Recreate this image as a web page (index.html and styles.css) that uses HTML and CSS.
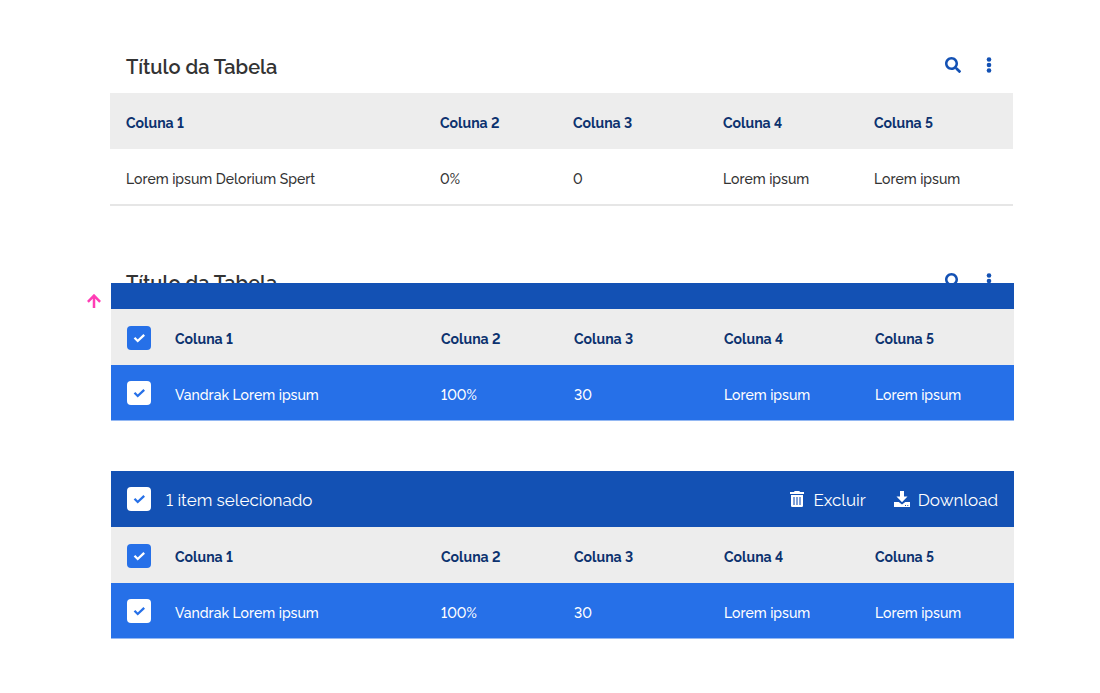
FILE: index.html
```html
<!DOCTYPE html>
<html lang="pt-BR">
<head>
<meta charset="utf-8">
<meta name="viewport" content="width=device-width, initial-scale=1">
<title>Título da Tabela</title>
<link rel="stylesheet" href="styles.css">
</head>
<body>
<svg class="sprite" aria-hidden="true">
  <symbol id="i-search" viewBox="0 0 512 512"><path d="M505 442.7 405.300 343c-4.500-4.500-10.600-7-17-7H372c27.600-35.300 44-79.700 44-128C416 93.100 322.900 0 208 0S0 93.100 0 208s93.100 208 208 208c48.300 0 92.700-16.400 128-44v16.300c0 6.400 2.500 12.500 7 17l99.700 99.700c9.400 9.400 24.600 9.400 33.900 0l28.300-28.300c9.400-9.400 9.400-24.600.1-34zM208 336c-70.700 0-128-57.200-128-128 0-70.700 57.200-128 128-128 70.700 0 128 57.200 128 128 0 70.700-57.200 128-128 128z"/></symbol>
  <symbol id="i-dots" viewBox="0 0 16 16"><circle cx="8" cy="2.500" r="2.300"/><circle cx="8" cy="8" r="2.300"/><circle cx="8" cy="13.500" r="2.300"/></symbol>
  <symbol id="i-check" viewBox="0 0 24 24"><path d="M7.500 11.800 10.700 15 17.200 8.800" fill="none" stroke="currentColor" stroke-width="2.300"/></symbol>
  <symbol id="i-trash" viewBox="0 0 16 16"><path d="M1 1h4L5.700 0h4.600L11 1h4v2H1z"/><path d="M2 4h12v10.800Q14 16 12.800 16H3.200Q2 16 2 14.800z"/><path class="slot" d="M4 6h2v8H4zM7 6h2v8H7zM10 6h2v8h-2z"/></symbol>
  <symbol id="i-download" viewBox="0 0 16 16"><path d="M6 0h4v5.500h3.500L8 11.300 2.500 5.500H6z"/><path fill-rule="evenodd" d="M0 11h4.700L8 13.500l3.300-2.500H16v5H0zM11 14v1h1v-1zM13.300 14v1h1v-1z"/></symbol>
  <symbol id="i-up" viewBox="0 0 14 14"><path d="M7 14V1.600M.900 7.800 7 1.600 13.100 7.800" fill="none" stroke="currentColor" stroke-width="2.500"/></symbol>
</svg>
<main>
  <section>
    <header class="bar">
      <h2>Título da Tabela</h2>
      <div class="tools">
        <button type="button" aria-label="Buscar"><svg><use href="#i-search"/></svg></button>
        <button type="button" aria-label="Mais opções"><svg><use href="#i-dots"/></svg></button>
      </div>
    </header>
    <table>
      <colgroup><col><col class="c2"><col class="c3"><col class="c4"><col class="c5"></colgroup>
      <thead><tr><th>Coluna 1</th><th>Coluna 2</th><th>Coluna 3</th><th>Coluna 4</th><th>Coluna 5</th></tr></thead>
      <tbody><tr><td>Lorem ipsum Delorium Spert</td><td>0%</td><td>0</td><td>Lorem ipsum</td><td>Lorem ipsum</td></tr></tbody>
    </table>
  </section>

  <section class="rising">
    <header class="bar">
      <h2>Título da Tabela</h2>
      <div class="tools">
        <button type="button" aria-label="Buscar"><svg><use href="#i-search"/></svg></button>
        <button type="button" aria-label="Mais opções"><svg><use href="#i-dots"/></svg></button>
      </div>
    </header>
    <div class="selected">
      <div class="cover"></div>
      <svg class="arrow" aria-hidden="true"><use href="#i-up"/></svg>
      <table>
        <colgroup><col class="c0"><col><col class="c2"><col class="c3"><col class="c4"><col class="c5"></colgroup>
        <thead><tr><th><label class="check"><input type="checkbox" checked aria-label="Selecionar tudo"><svg><use href="#i-check"/></svg></label></th><th>Coluna 1</th><th>Coluna 2</th><th>Coluna 3</th><th>Coluna 4</th><th>Coluna 5</th></tr></thead>
        <tbody><tr><td><label class="check light"><input type="checkbox" checked aria-label="Selecionar linha"><svg><use href="#i-check"/></svg></label></td><td>Vandrak Lorem ipsum</td><td>100%</td><td>30</td><td>Lorem ipsum</td><td>Lorem ipsum</td></tr></tbody>
      </table>
    </div>
  </section>

  <section class="selected">
    <header class="bar actions">
      <label class="check light"><input type="checkbox" checked aria-label="Selecionar todos os itens"><svg><use href="#i-check"/></svg></label>
      <p>1 item selecionado</p>
      <button type="button"><svg><use href="#i-trash"/></svg><span>Excluir</span></button>
      <button type="button"><svg><use href="#i-download"/></svg><span>Download</span></button>
    </header>
    <table>
      <colgroup><col class="c0"><col><col class="c2"><col class="c3"><col class="c4"><col class="c5"></colgroup>
      <thead><tr><th><label class="check"><input type="checkbox" checked aria-label="Selecionar tudo"><svg><use href="#i-check"/></svg></label></th><th>Coluna 1</th><th>Coluna 2</th><th>Coluna 3</th><th>Coluna 4</th><th>Coluna 5</th></tr></thead>
      <tbody><tr><td><label class="check light"><input type="checkbox" checked aria-label="Selecionar linha"><svg><use href="#i-check"/></svg></label></td><td>Vandrak Lorem ipsum</td><td>100%</td><td>30</td><td>Lorem ipsum</td><td>Lorem ipsum</td></tr></tbody>
    </table>
  </section>
</main>
</body>
</html>
```
FILE: styles.css
```css
* { box-sizing: border-box; }
body {
  margin: 0;
  background: #fff;
  color: #333;
  font: 500 14px/20px Raleway, Lato, "Open Sans", sans-serif;
  font-variant-numeric: lining-nums;
}
.sprite { position: absolute; width: 0; height: 0; }
main { padding: 37px 87px 48px 110px; }
svg { width: 16px; height: 16px; fill: currentColor; display: block; }

.bar {
  display: flex;
  align-items: center;
  height: 56px;
  padding: 0 16px;
}
h2 {
  margin: 0;
  padding-top: 4px;
  flex: 1;
  font-size: 20px;
  line-height: 28px;
  font-weight: 600;
}
.tools { display: flex; gap: 20px; }
button {
  border: 0;
  padding: 0;
  background: none;
  font: inherit;
  color: inherit;
  cursor: pointer;
}
.tools button { color: #1351b4; }

table { width: 100%; border-collapse: separate; border-spacing: 0; table-layout: fixed; }
.c0 { width: 48px; }
.c2 { width: 133px; }
.c3 { width: 150px; }
.c4 { width: 151px; }
.c5 { width: 155px; }
th, td { height: 56px; padding: 4px 0 0 16px; text-align: left; }
th { background: #ededed; color: #0c326f; font-weight: 700; }
td { height: 57px; border-bottom: 2px solid #e6e6e6; }

.rising { margin-top: 47px; }
.selected { position: relative; margin: 0 -1px 0 1px; }
.selected td {
  height: 56px;
  background: #2670e8;
  border-bottom: 1px solid #94b8f3;
  color: #fff;
}
.selected th:first-child { padding-top: 2px; }
.selected td:first-child { padding-top: 0; }
.cover {
  position: absolute;
  left: 0;
  right: 0;
  top: -26px;
  height: 26px;
  background: #1351b4;
}
.arrow {
  position: absolute;
  left: -24px;
  top: -15px;
  width: 14px;
  height: 14px;
  color: #ff3db5;
}
section.selected { margin-top: 50px; }

.check { display: grid; width: 24px; height: 24px; color: #fff; }
.check input, .check svg { grid-area: 1 / 1; width: 24px; height: 24px; margin: 0; }
.check svg { pointer-events: none; z-index: 1; }
.check input { appearance: none; border-radius: 4px; background: #2670e8; }
.light { color: #2670e8; }
.light input { background: #fff; }

.actions { background: #1351b4; color: #fff; font-size: 17px; line-height: 24px; font-weight: 400; }
.actions p { flex: 1; margin: 0; padding: 2px 0 0 15px; }
.actions button { display: flex; align-items: center; gap: 8px; margin-left: 28px; }
.actions span { padding-top: 2px; }
.slot { fill: #7f9fd6; }
```
